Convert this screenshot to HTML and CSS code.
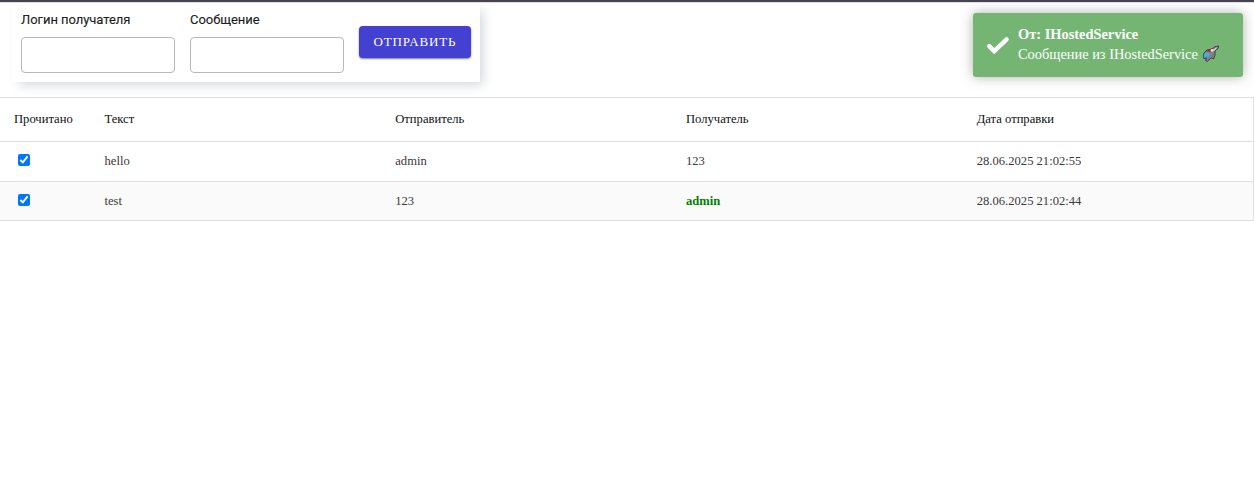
FILE: index.html
```html
<!DOCTYPE html>
<html lang="ru">
<head>
<meta charset="utf-8">
<title>Сообщения</title>
<link rel="stylesheet" href="styles.css">
</head>
<body>
<div class="topbar"></div>
<form class="composer">
  <label class="field"><span class="field-label">Логин получателя</span><input class="field-input" type="text"></label>
  <label class="field"><span class="field-label">Сообщение</span><input class="field-input" type="text"></label>
  <button class="send" type="button">ОТПРАВИТЬ</button>
</form>
<div class="grid">
  <div class="row head"><div>Прочитано</div><div>Текст</div><div>Отправитель</div><div>Получатель</div><div>Дата отправки</div></div>
  <div class="row"><div class="check"><input type="checkbox" checked></div><div>hello</div><div>admin</div><div>123</div><div>28.06.2025 21:02:55</div></div>
  <div class="row alt"><div class="check"><input type="checkbox" checked></div><div>test</div><div>123</div><div class="me">admin</div><div>28.06.2025 21:02:44</div></div>
</div>
<div class="toast">
  <svg class="toast-check" width="24" height="24" viewBox="0 0 24 24"><path d="M3.2 13.1l5 5L20.6 6.4" fill="none" stroke="#fff" stroke-width="4.4" stroke-linecap="round"/></svg>
  <div class="toast-body">
    <div class="toast-title">От: IHostedService</div>
    <div class="toast-text"><span class="toast-message">Сообщение из IHostedService</span>
      <svg class="rocket" width="18" height="18" viewBox="0 0 18 18">
        <path d="M1.8 8.2L5 5L10 4L13 1.6L16.6 1L16 3.6L13 5.6L13 10L11.6 14L9.8 13L8.4 13.4L5.4 16.4L3.6 15.6L4.2 12.8L1.8 13.6L1.4 11Z" fill="#808187" stroke="#3c3f42" stroke-width="1" stroke-linejoin="round"/>
        <path d="M2 8.8L6 7L8 9.3L6.2 12.3L3.8 11.6L2 13.2L1.7 11Z" fill="#3db2e6"/>
        <path d="M5 5L9.4 3.4L8.6 6.8L5.4 6.8Z" fill="#a82838"/>
        <path d="M10.5 5L14.2 2.4L15.4 2.2L14.4 3.8L11.8 6.2Z" fill="#d3d1d4"/>
        <circle cx="10" cy="5.4" r="1.3" fill="#f3dce0"/>
      </svg>
    </div>
  </div>
</div>
</body>
</html>
```
FILE: styles.css
```css
* { box-sizing: border-box; }
body {
  margin: 0;
  background: #fff;
  font-family: "Liberation Serif", "Times New Roman", serif;
  overflow: hidden;
}
.topbar { height: 3px; background: #46424f; border-bottom: 1px solid #e0e0e0; position: relative; z-index: 1; }
.composer {
  display: flex;
  width: 468px;
  height: 79px;
  margin: 0 0 15px 12px;
  padding: 8px 9px;
  gap: 15px;
  background: #fff;
  box-shadow: 5px 5px 10px -2px rgba(34, 60, 80, .2);
}
.field { display: flex; flex-direction: column; width: 154px; }
.field-label {
  height: 26px;
  font: 400 13px/18px Roboto, sans-serif;
  letter-spacing: -.05px;
  -webkit-text-stroke: .2px currentColor;
  color: rgba(0, 0, 0, .87);
  white-space: nowrap;
}
.field-input { width: 154px; height: 36px; padding: 0 8px; border: 1px solid #b8b8b8; border-radius: 4px; background: #fff; }
.send {
  width: 112px;
  height: 32px;
  margin-top: 15px;
  padding: 0;
  border: 0;
  border-radius: 4px;
  background: #4340d2;
  color: #fff;
  font: 13px/32px "Liberation Serif", "Times New Roman", serif;
  letter-spacing: .85px;
  box-shadow: 0 1px 2px rgba(0, 0, 0, .5);
}
.grid { border: 1px solid #e0e0e0; border-left: 0; font-size: 12.6px; color: #3a3a3a; }
.row {
  display: grid;
  grid-template-columns: 90.5px repeat(4, 290.75px);
  height: 40px;
  align-items: center;
}
.row > div { padding: 0 0 2px 14px; line-height: 18px; }
.row + .row { border-top: 1px solid #e0e0e0; }
.row.head { height: 43px; color: #111; }
.row.alt { background: #fafafa; height: 39px; }
.row.alt > div { padding-bottom: 0; }
.row > .check { padding: 0 0 4px 18px; display: flex; }
.row.alt > .check { padding-bottom: 4px; }
.check input { width: 12px; height: 12px; margin: 0; accent-color: #0075ff; }
.row > .me { color: #008000; font-weight: 700; }
.row.alt > .check { padding-bottom: 3px; }
.toast {
  position: absolute;
  left: 973px;
  top: 13px;
  width: 270px;
  height: 64px;
  display: flex;
  align-items: center;
  padding-left: 13px;
  border-radius: 3px;
  background: #74b574;
  color: #fff;
  box-shadow: 0 0 12px rgba(100, 100, 100, .5);
}
.toast-check { margin-right: 8px; flex: none; }
.toast-body { font-size: 14.4px; line-height: 20px; padding-bottom: 2px; }
.toast-title { font-weight: 700; }
.toast-text { display: flex; align-items: center; gap: 4px; white-space: nowrap; height: 20px; }
.rocket { flex: none; }
```
